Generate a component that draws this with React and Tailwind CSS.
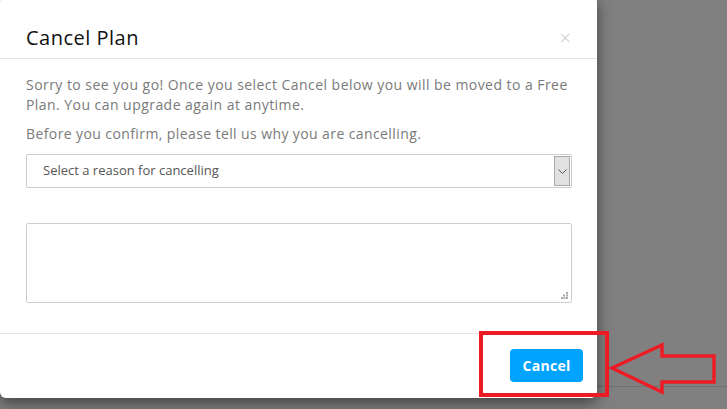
export default function App() {
  return (
    <div className="relative h-[409px] w-[727px] overflow-hidden bg-[#808080] font-['Open_Sans',sans-serif]">
      {/* page line behind the overlay */}
      <div className="absolute left-0 right-0 top-[386px] h-px bg-[#6f6f6f]" />

      {/* Modal */}
      <div className="relative mt-[-4px] w-[597px] rounded-md bg-white shadow-[0_5px_15px_rgba(0,0,0,0.5)]">
        <div className="flex items-center justify-between border-b border-[#e5e5e5] pl-[26px] pr-[26px] pb-[8px] pt-[30px]">
          <h1 className="text-[20px] leading-6 tracking-[0.5px] text-[#111]">Cancel Plan</h1>
          <span className="text-[20px] font-light leading-6 text-[#c8c8c8]">×</span>
        </div>

        <div className="pl-[26px] pr-[25px] pb-[30px] pt-[16px]">
          <p className="text-[14px] leading-5 tracking-[0.45px] text-[#7a7a7a]">
            Sorry to see you go! Once you select Cancel below you will be moved to a Free Plan. You can upgrade again at anytime.
          </p>
          <p className="mt-[9px] text-[14px] leading-5 tracking-[0.4px] text-[#7a7a7a]">
            Before you confirm, please tell us why you are cancelling.
          </p>

          {/* Select */}
          <div className="mt-[10px] flex h-[34px] items-stretch rounded-[2px] border border-[#cdcdcd]">
            <span className="flex flex-1 items-center pl-[16px] text-[13px] text-[#555]">Select a reason for cancelling</span>
            <span className="m-px flex w-[16px] items-center justify-center border border-[#a9a9a9] bg-[#e1e1e1]">
              <svg width="9" height="5" viewBox="0 0 9 5" fill="none">
                <path d="M0.5 0.5 L4.5 4.5 L8.5 0.5" stroke="#555" strokeWidth="1" />
              </svg>
            </span>
          </div>

          {/* Textarea */}
          <div className="relative mt-[35px] h-[80px] rounded-[2px] border border-[#cdcdcd]">
            <svg className="absolute bottom-[3px] right-[3px]" width="7" height="7" viewBox="0 0 7 7">
              <rect x="5" y="0" width="2" height="2" fill="#aaa" />
              <rect x="2" y="2.5" width="2" height="2" fill="#aaa" />
              <rect x="5" y="2.5" width="2" height="2" fill="#aaa" />
              <rect x="0" y="5" width="2" height="2" fill="#aaa" />
              <rect x="2.5" y="5" width="2" height="2" fill="#aaa" />
              <rect x="5" y="5" width="2" height="2" fill="#aaa" />
            </svg>
          </div>
        </div>

        <div className="flex justify-end border-t border-[#e5e5e5] px-[14px] pt-[15px] pb-[16px]">
          <button className="h-[33px] w-[73px] rounded-[4px] bg-[#00a3ff] text-[14px] font-bold tracking-[0.3px] text-white">
            Cancel
          </button>
        </div>
      </div>

      {/* Annotation: red box */}
      <div className="absolute left-[479px] top-[331px] h-[66px] w-[130px] border-4 border-[#ed1c24]" />

      {/* Annotation: arrow */}
      <svg className="absolute left-[608px] top-[340px]" width="112" height="56" viewBox="0 0 112 56">
        <path
          d="M4 28 L54 5 L54 16 L106 16 L106 42 L54 42 L54 52 Z"
          fill="none"
          stroke="#ed1c24"
          strokeWidth="3.5"
          strokeLinejoin="miter"
        />
      </svg>
    </div>
  );
}
